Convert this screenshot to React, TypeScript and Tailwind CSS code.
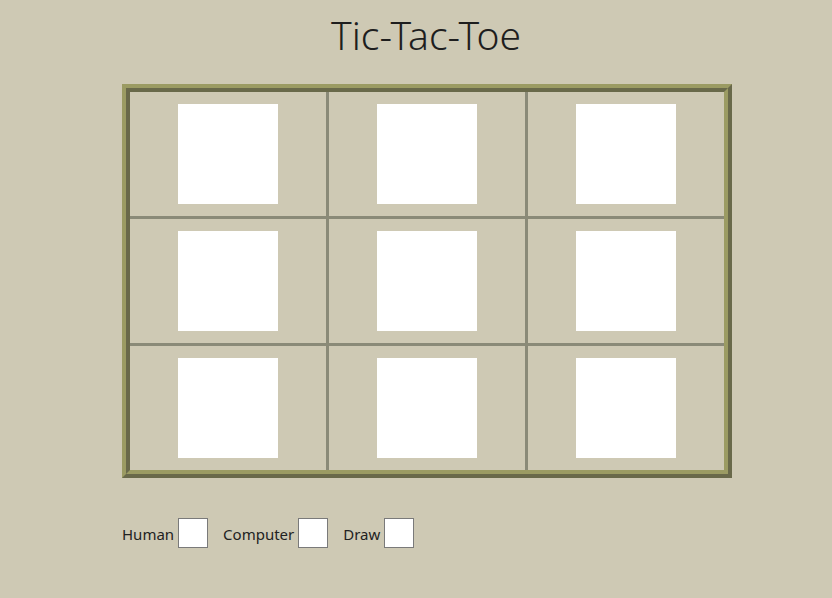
import React from "react";

const Cell = () => (
  <div className="flex items-center justify-center bg-[#cec9b4]">
    <div className="w-[100px] h-[100px] bg-white" />
  </div>
);

const Score = ({ label }: { label: string }) => (
  <div className="flex items-center">
    <span className="mr-[4px] mt-[3px]">{label}</span>
    <div className="w-[30px] h-[30px] bg-white border border-[#7a7a7a]" />
  </div>
);

export default function App() {
  return (
    <div
      className="w-[832px] h-[598px] bg-[#cec9b4] text-[#222222] flex flex-col"
      style={{ fontFamily: '"Noto Sans", "Open Sans", sans-serif' }}
    >
      <h1 className="text-[39px] leading-none text-center mt-[15px] h-[54px] pl-[20px] font-light text-[#1e1e1e]">Tic-Tac-Toe</h1>
      <div className="ml-[122px] mt-[15px] w-[610px] border-4 border-t-[#9b9b63] border-l-[#9b9b63] border-b-[#69694a] border-r-[#69694a]">
        <div className="border-4 border-t-[#69694a] border-l-[#69694a] border-b-[#9b9b63] border-r-[#9b9b63]">
          <div className="grid grid-cols-[196px_196px_196px] grid-rows-[124px_124px_124px] gap-[3px] bg-[#8a8a78]">
            {Array.from({ length: 9 }).map((_, i) => (
              <Cell key={i} />
            ))}
          </div>
        </div>
      </div>
      <div className="ml-[122px] mt-[40px] flex items-center gap-[15px] text-[15px]">
        <Score label="Human" />
        <Score label="Computer" />
        <Score label="Draw" />
      </div>
    </div>
  );
}
